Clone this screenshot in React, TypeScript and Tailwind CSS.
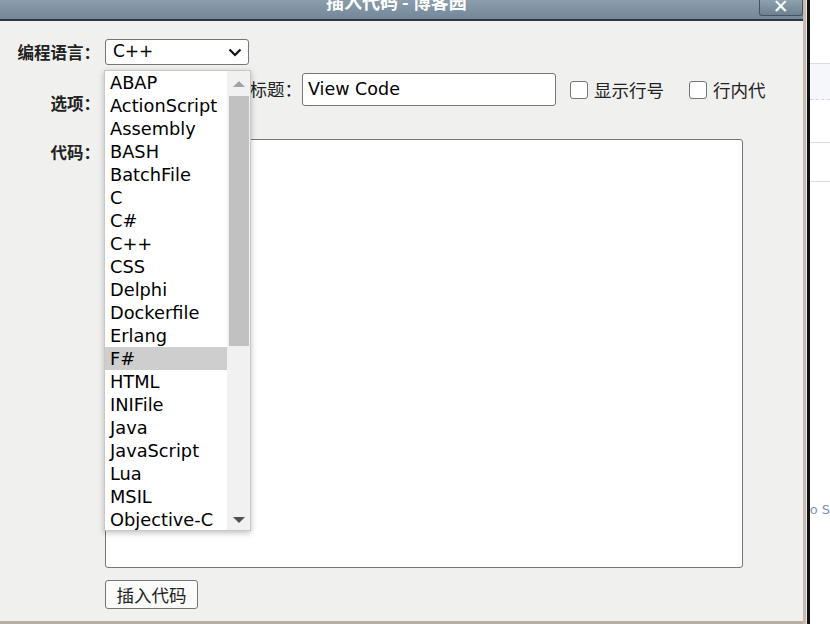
import React from "react";

const languages = [
    "ABAP",
    "ActionScript",
    "Assembly",
    "BASH",
    "BatchFile",
    "C",
    "C#",
    "C++",
    "CSS",
    "Delphi",
    "Dockerfile",
    "Erlang",
    "F#",
    "HTML",
    "INIFile",
    "Java",
    "JavaScript",
    "Lua",
    "MSIL",
    "Objective-C",
];

function Checkbox({ label }: { label: string }) {
    return (
        <label className="flex items-center gap-[6px]">
            <span className="w-[18px] h-[18px] border border-[#767676] rounded-[3px] bg-white"></span>
            <span className="text-[17.5px] leading-[22px] text-[#222]">{label}</span>
        </label>
    );
}

function LanguageList() {
    return (
        <div className="absolute left-[104px] top-[70px] w-[147px] h-[461px] flex bg-white border border-[#c8c8c8] shadow-[0_2px_6px_rgba(0,0,0,0.25)] font-['DejaVu_Sans',sans-serif]">
            <ul className="flex-1 flex flex-col">
                {languages.map((lang) => (
                    <li
                        key={lang}
                        className={
                            lang === "F#"
                                ? "h-[23px] pl-[5px] text-[17.8px] leading-[24px] text-black bg-[#cecece]"
                                : "h-[23px] pl-[5px] text-[17.8px] leading-[24px] text-black"
                        }
                    >
                        {lang}
                    </li>
                ))}
            </ul>
            <div className="w-[23px] bg-[#f1f1f1] flex flex-col items-center">
                <div className="h-[25px] flex items-center justify-center">
                    <svg width="12" height="7" viewBox="0 0 12 7">
                        <path d="M0 7 L6 1 L12 7 Z" fill="#a3a3a3" />
                    </svg>
                </div>
                <div className="w-[20px] h-[250px] bg-[#c1c1c1]"></div>
                <div className="flex-1 flex items-end justify-center pb-[6px]">
                    <svg width="12" height="7" viewBox="0 0 12 7">
                        <path d="M0 0 L6 6 L12 0 Z" fill="#505050" />
                    </svg>
                </div>
            </div>
        </div>
    );
}

export default function App() {
    return (
        <div className="relative w-[830px] h-[624px] overflow-hidden flex bg-white font-['Noto_Sans_CJK_SC',sans-serif]">
            <div className="w-[808px] flex flex-col">
                {/* title bar */}
                <div className="h-[21px] flex bg-gradient-to-b from-[#8b9dad] to-[#73879a] border-b-2 border-[#2e3841]">
                    <div className="flex-1 flex justify-center pl-[34px] overflow-hidden">
                        <span className="mt-[-10px] text-[18px] leading-[22px] font-bold text-white">
                            插入代码 - 博客园
                        </span>
                    </div>
                    <div className="w-[44px] h-[16px] flex items-end justify-center border border-t-0 border-[#46535f] rounded-b-[3px] bg-gradient-to-b from-[#8fa1af] to-[#6d8190]">
                        <span className="text-white font-bold text-[19px] leading-[17px] font-['DejaVu_Sans',sans-serif]">
                            ✕
                        </span>
                    </div>
                </div>

                {/* body */}
                <div className="flex-1 bg-[#f0f0ee] border-b-[3px] border-[#b9aea6] flex flex-col">
                    <div className="flex items-center mt-[18px] h-[26px]">
                        <div className="w-[100px] text-right text-[16.5px] font-bold text-[#222] whitespace-nowrap">
                            编程语言：
                        </div>
                        <div className="ml-[5px] w-[144px] h-[26px] flex items-center justify-between pl-[7px] pr-[6px] bg-white border border-[#767676] rounded-[3px] font-['DejaVu_Sans',sans-serif] text-[17px] text-black">
                            <span>C++</span>
                            <svg width="14" height="9" viewBox="0 0 14 9">
                                <path
                                    d="M1.5 1.5 L7 7 L12.5 1.5"
                                    fill="none"
                                    stroke="#111"
                                    strokeWidth="2.2"
                                />
                            </svg>
                        </div>
                    </div>

                    <div className="flex mt-[8px] h-[60px]">
                        <div className="w-[100px] flex items-center justify-end text-[16.5px] font-bold text-[#222]">
                            选项：
                        </div>
                        <div className="ml-[5px] flex items-start">
                            <div className="w-[197px] h-[33px] flex items-center justify-end text-[17.5px] text-[#222]">
                                标题：
                            </div>
                            <div className="w-[254px] h-[33px] flex items-center pl-[5px] bg-white border border-[#767676] rounded-[3px] font-['DejaVu_Sans',sans-serif] text-[17.5px] text-black">
                                View Code
                            </div>
                            <div className="h-[33px] flex items-center ml-[14px] gap-[25px]">
                                <Checkbox label="显示行号" />
                                <Checkbox label="行内代" />
                            </div>
                        </div>
                    </div>

                    <div className="flex mt-[6px]">
                        <div className="w-[100px] pt-[1px] text-right text-[16.5px] font-bold text-[#222]">
                            代码：
                        </div>
                        <div className="ml-[5px] w-[638px] h-[429px] bg-white border border-[#767676] rounded-[3px]"></div>
                    </div>

                    <div className="flex mt-[12px] pl-[105px]">
                        <button className="w-[93px] h-[29px] bg-[#fbfbfb] border border-[#767676] rounded-[3px] text-[17.5px] leading-[27px] text-[#222]">
                            插入代码
                        </button>
                    </div>
                </div>
            </div>

            {/* page behind the dialog */}
            <div className="w-[3px] bg-[#c6bab1]"></div>
            <div className="w-[1px] bg-[#ebe7e3]"></div>
            <div className="w-[3px] bg-[#111]"></div>
            <div className="flex-1 flex flex-col bg-white">
                <div className="h-[64px] border-b border-[#dcdcdc]"></div>
                <div className="h-[36px] bg-[#f5f7fb] border-b border-dashed border-[#d5d5d5]"></div>
                <div className="h-[43px] border-b border-[#dcdcdc]"></div>
                <div className="h-[39px] border-b border-[#dcdcdc]"></div>
                <div className="mt-[320px] text-[13px] leading-[16px] text-[#7d93b5] whitespace-nowrap font-['DejaVu_Sans',sans-serif]">
                    o S
                </div>
            </div>

            <LanguageList />
        </div>
    );
}
